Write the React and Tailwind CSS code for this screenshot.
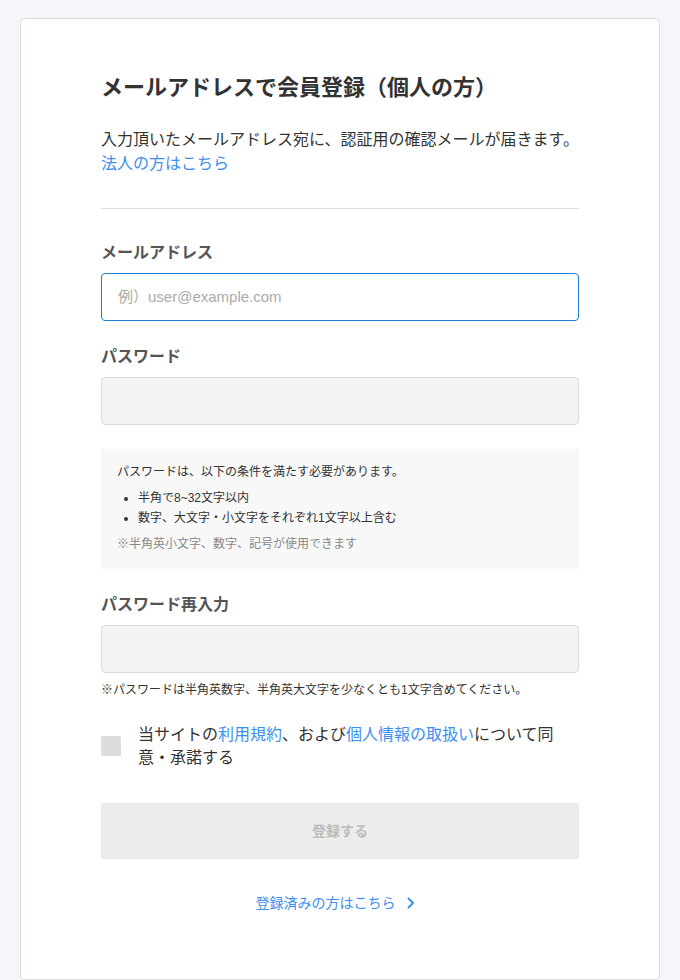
import React from "react";

const font = { fontFamily: '"Liberation Sans", "Noto Sans CJK JP", sans-serif' };

export default function App() {
  return (
    <div className="min-h-[980px] bg-[#f5f6fa] pt-[18px]" style={font}>
      <div className="mx-auto w-[640px] min-h-[962px] bg-white border border-[#dcdcdc] rounded-[4px] px-[80px] pt-[52px] text-[#333]">
        <h1 className="text-[22px] leading-[33px] font-bold text-[#333]">
          メールアドレスで会員登録（個人の方）
        </h1>
        <p className="mt-6 text-[16px] leading-[24px] text-[#333]">
          入力頂いたメールアドレス宛に、認証用の確認メールが届きます。
          <br />
          <a className="text-[#3d8ff0]">法人の方はこちら</a>
        </p>
        <div className="mt-[32px] h-px bg-[#dddddd]" />

        <div className="mt-[32px] text-[16px] leading-[24px] font-bold text-[#555]">メールアドレス</div>
        <div className="mt-2 h-[48px] rounded-[4px] border border-[#1a7fd4] flex items-center px-4">
          <span className="text-[15px] text-[#aaaaaa]">例）user@example.com</span>
        </div>

        <div className="mt-6 text-[16px] leading-[24px] font-bold text-[#555]">パスワード</div>
        <div className="mt-2 h-[48px] rounded-[4px] border border-[#dcdcdc] bg-[#f3f3f3]" />

        <div className="mt-6 bg-[#f8f8f8] px-4 pt-[14px] pb-4">
          <p className="text-[12px] leading-[18px] text-[#333]">パスワードは、以下の条件を満たす必要があります。</p>
          <ul className="mt-[7px] list-disc pl-[21px] text-[12px] leading-[20px] text-[#333]">
            <li>半角で8~32文字以内</li>
            <li>数字、大文字・小文字をそれぞれ1文字以上含む</li>
          </ul>
          <p className="mt-[7px] text-[12px] leading-[18px] text-[#888]">※半角英小文字、数字、記号が使用できます</p>
        </div>

        <div className="mt-6 text-[16px] leading-[24px] font-bold text-[#555]">パスワード再入力</div>
        <div className="mt-2 h-[48px] rounded-[4px] border border-[#dcdcdc] bg-[#f3f3f3]" />
        <p className="mt-2 text-[12px] leading-[18px] text-[#333]">
          ※パスワードは半角英数字、半角英大文字を少なくとも1文字含めてください。
        </p>

        <div className="mt-[24px] flex items-center gap-[17px]">
          <div className="w-[20px] h-[20px] rounded-[2px] bg-[#dddddd] shrink-0" />
          <p className="w-[420px] text-[16px] leading-[23px] text-[#333]">
            当サイトの<span className="text-[#3d8ff0]">利用規約</span>、および<span className="text-[#3d8ff0]">個人情報の取扱い</span>について同
            <br />
            意・承諾する
          </p>
        </div>

        <div className="mt-[34px] h-[56px] bg-[#ececec] flex items-center justify-center">
          <span className="text-[14px] font-bold text-[#bbbbbb]">登録する</span>
        </div>

        <div className="mt-[34px] flex items-center justify-center gap-[11px] pr-[10px]">
          <span className="text-[14px] leading-[20px] text-[#3d8ff0]">登録済みの方はこちら</span>
          <svg width="8" height="12" viewBox="0 0 8 12" fill="none">
            <path d="M1.5 1.5 L6 6 L1.5 10.5" stroke="#3d8ff0" strokeWidth="2" strokeLinecap="round" strokeLinejoin="round" />
          </svg>
        </div>
      </div>
    </div>
  );
}
